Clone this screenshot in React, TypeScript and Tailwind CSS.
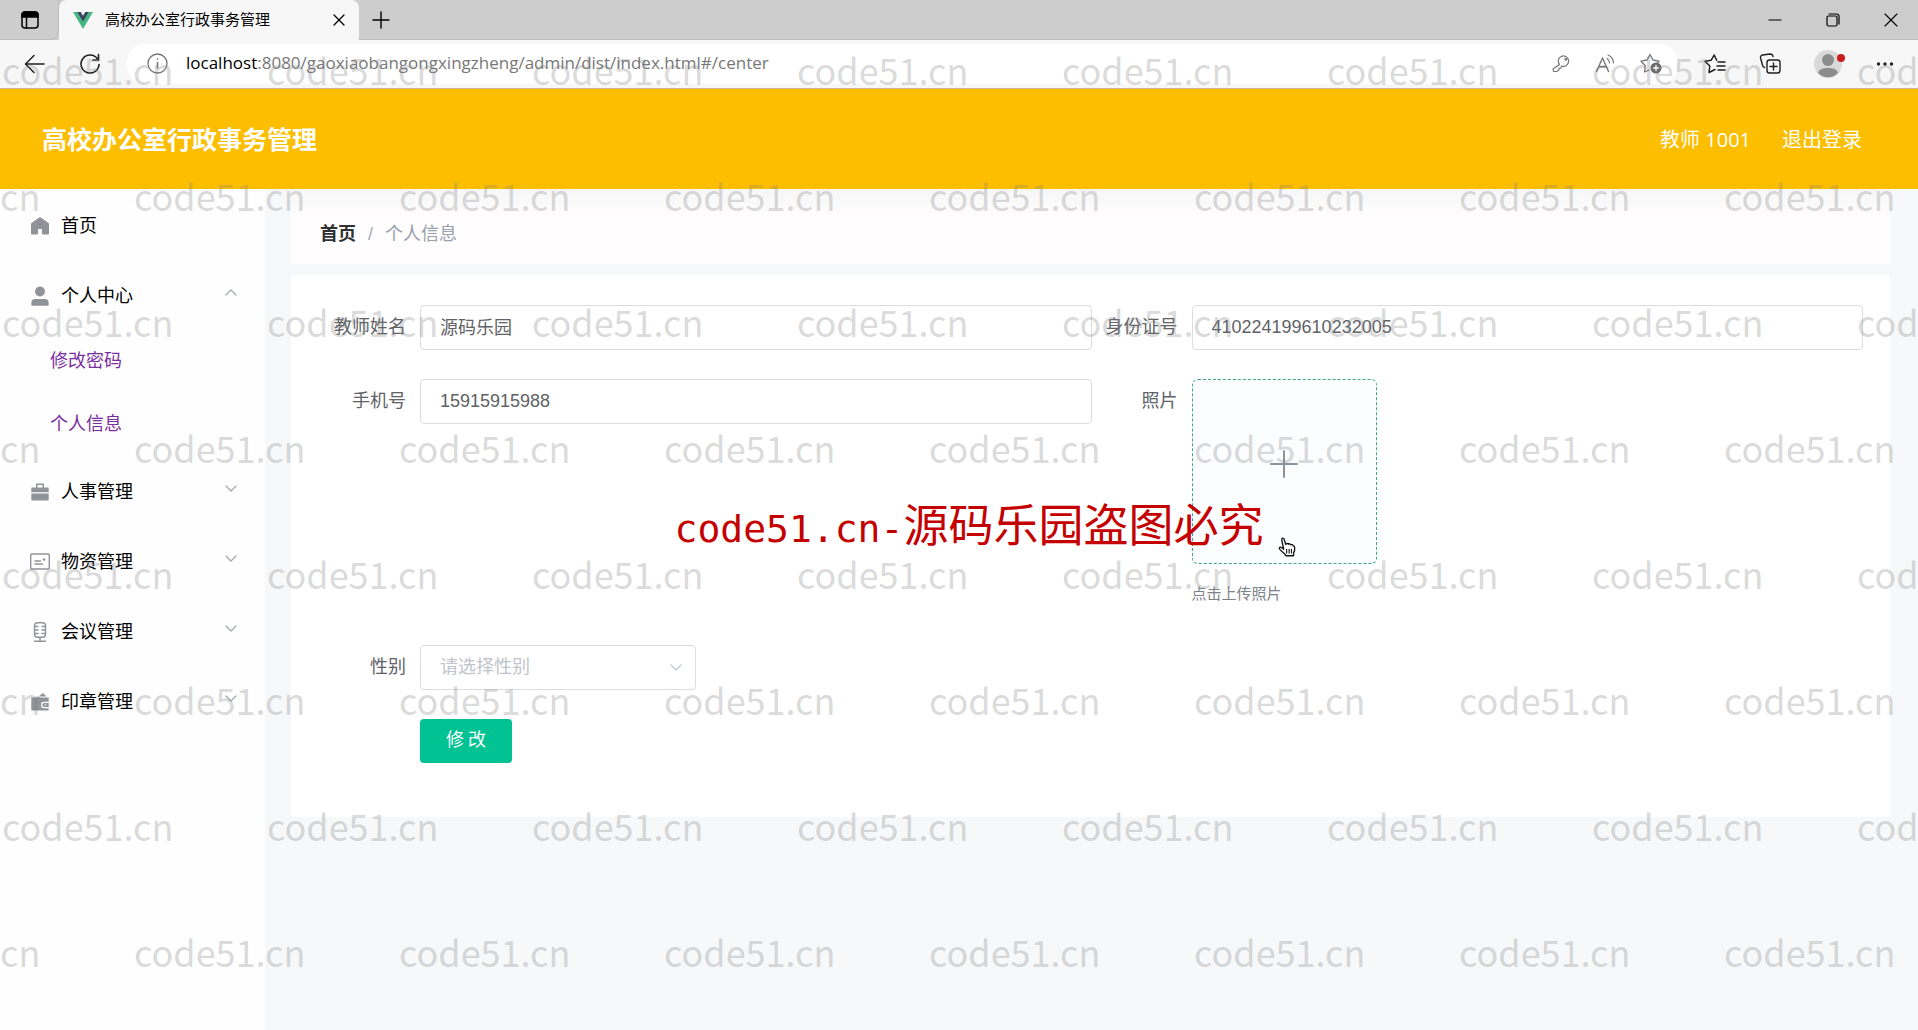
import type { ReactNode } from "react";

const stroke = {
  fill: "none",
  stroke: "currentColor",
  strokeLinecap: "round" as const,
  strokeLinejoin: "round" as const,
};

function BrowserTabs() {
  return (
    <div className="flex h-10 items-stretch bg-[#cdcdcd] text-black">
      <div className="flex w-[59px] items-center rounded-br-lg border-r border-b border-[#bdbdbd] pl-[21px]">
        <button type="button" aria-label="标签页操作">
          <svg width="18" height="18" viewBox="0 0 18 18" {...stroke} strokeWidth="1.5">
            <rect x="1" y="1" width="16" height="16" rx="3" />
            <path d="M1 4a3 3 0 0 1 3-3h10a3 3 0 0 1 3 3v2H1z" fill="currentColor" />
            <path d="M5.500 6v11" />
          </svg>
        </button>
      </div>
      <div className="flex w-[300px] items-center rounded-t-lg bg-[#f7f7f7] pr-2.5 pl-[14px]">
        <svg width="20" height="17" viewBox="0 0 20 17">
          <path d="M0 0h4l6 10L16 0h4L10 17z" fill="#42b883" />
          <path d="M4 0h3.800L10 3.800 12.200 0H16l-6 10z" fill="#35495e" />
        </svg>
        <span className="ml-3 flex-1 text-[15px]">高校办公室行政事务管理</span>
        <button type="button" aria-label="关闭标签页" className="p-1">
          <svg width="12" height="12" viewBox="0 0 12 12" {...stroke} strokeWidth="1.3">
            <path d="M1 1l10 10M11 1L1 11" />
          </svg>
        </button>
      </div>
      <div className="flex flex-1 items-center border-b border-[#bdbdbd] pl-[13px]">
        <button type="button" aria-label="新建标签页">
          <svg width="18" height="18" viewBox="0 0 18 18" {...stroke} strokeWidth="1.4">
            <path d="M9 1v16M1 9h16" />
          </svg>
        </button>
        <div className="ml-auto flex items-center gap-11 pr-5">
          <button type="button" aria-label="最小化">
            <svg width="14" height="14" viewBox="0 0 14 14" {...stroke} strokeWidth="1.2">
              <path d="M1 7h12" />
            </svg>
          </button>
          <button type="button" aria-label="还原">
            <svg width="14" height="14" viewBox="0 0 14 14" {...stroke} strokeWidth="1.2">
              <rect x="1" y="3" width="10" height="10" rx="1.500" />
              <path d="M3 1h7.500A2.500 2.500 0 0 1 13 3.500V11" />
            </svg>
          </button>
          <button type="button" aria-label="关闭">
            <svg width="14" height="14" viewBox="0 0 14 14" {...stroke} strokeWidth="1.1">
              <path d="M1 1l12 12M13 1L1 13" />
            </svg>
          </button>
        </div>
      </div>
    </div>
  );
}

function AddressBar() {
  return (
    <div className="flex h-[49px] items-center border-b border-[#c9b98c] bg-[#f7f7f7] pb-px text-[#1f1f1f]">
      <div className="flex w-[127px] items-center gap-[34px] pl-6">
        <button type="button" aria-label="后退">
          <svg width="21" height="20" viewBox="0 0 21 20" {...stroke} strokeWidth="1.5">
            <path d="M20 10H2M10 1.500L1.500 10l8.500 8.500" />
          </svg>
        </button>
        <button type="button" aria-label="刷新">
          <svg width="22" height="22" viewBox="0 0 22 22" {...stroke} strokeWidth="1.600">
            <path d="M20 11.500A9 9 0 1 1 18.500 6" />
            <path d="M19.500 1.500V7H14" />
          </svg>
        </button>
      </div>
      <div className="flex h-10 flex-1 items-center rounded-[18px] bg-white pr-4 pl-5 text-[#777]">
        <svg width="21" height="21" viewBox="0 0 21 21" {...stroke} strokeWidth="1.300">
          <circle cx="10.500" cy="10.500" r="9.500" />
          <path d="M10.500 9.500v5.500M10.500 6v.300" strokeWidth="1.600" />
        </svg>
        <p className="ml-[18px] flex-1 font-['Open_Sans',sans-serif] text-[17px]">
          <span className="text-black">localhost</span>:8080/gaoxiaobangongxingzheng/admin/dist/index.html#/center
        </p>
        <div className="flex items-center gap-6">
          <button type="button" aria-label="密码">
            <svg width="19" height="19" viewBox="0 0 19 19" {...stroke} strokeWidth="1.200">
              <path d="M7.500 10.500A5.200 5.200 0 1 1 11 12.300L9.500 12l-.500 2-2 .300-.300 2-2.200 1.200H1.500L1 15z" />
              <circle cx="13.800" cy="5.200" r=".9" />
            </svg>
          </button>
          <button type="button" aria-label="大声朗读">
            <svg width="21" height="19" viewBox="0 0 21 19" {...stroke} strokeWidth="1.400">
              <path d="M1.500 17.500L7.500 4l6 13.500M3.700 12.700h7.600" />
              <path d="M12 4.500a5.500 5.500 0 0 1 2.500 4.500M13 1a9 9 0 0 1 5.500 8" strokeWidth="1.200" />
            </svg>
          </button>
          <button type="button" aria-label="添加到收藏夹">
            <svg width="22" height="21" viewBox="0 0 22 21" {...stroke} strokeWidth="1.300">
              <path d="M9 17l-4.500 2 .800-6.200L1 8.200l6-1.200L10 1.500 13 7l6 1.200-1.800 2" />
              <circle cx="16" cy="15" r="5.500" fill="#6b6b6b" stroke="none" />
              <path d="M16 12.500v5M13.500 15h5" stroke="#fff" />
            </svg>
          </button>
        </div>
      </div>
      <div className="flex w-60 items-center pr-6 pl-[26px]">
        <button type="button" aria-label="收藏夹">
          <svg width="22" height="20" viewBox="0 0 22 20" {...stroke} strokeWidth="1.500">
            <path d="M11 15.500l-6 3 .800-6.500L1 7.200l6.200-1L10.200 1l2.500 5.200" />
            <path d="M14 8h7M13 12h8M14 16h7" />
          </svg>
        </button>
        <button type="button" aria-label="集锦" className="ml-[33px]">
          <svg width="22" height="21" viewBox="0 0 22 21" {...stroke} strokeWidth="1.400">
            <rect x="8" y="7" width="13" height="13" rx="2.500" />
            <path d="M14.500 10v7M11 13.500h7" />
            <path d="M5.500 14.500A3 3 0 0 1 3.500 12L1.500 5a2.500 2.500 0 0 1 2-3L11 1a3 3 0 0 1 3 2.500" />
          </svg>
        </button>
        <button type="button" aria-label="个人资料" className="ml-[33px]">
          <svg width="32" height="28" viewBox="0 0 32 28">
            <circle cx="14" cy="14" r="14" fill="#d9d9d9" />
            <circle cx="14" cy="10" r="6" fill="#8c8c8c" />
            <path d="M4 23c1-4 5-5 10-5s9 1 10 5a14 14 0 0 1-20 0z" fill="#8c8c8c" />
            <circle cx="27" cy="8" r="4" fill="#c81e1e" />
          </svg>
        </button>
        <button type="button" aria-label="更多" className="ml-auto">
          <svg width="18" height="4" viewBox="0 0 18 4" fill="#222">
            <circle cx="2.500" cy="2" r="1.700" />
            <circle cx="9" cy="2" r="1.700" />
            <circle cx="15.500" cy="2" r="1.700" />
          </svg>
        </button>
      </div>
    </div>
  );
}

const icons: Record<string, ReactNode> = {
  home: <path d="M10 1.500l8.500 6V18h-6v-5.500h-5V18h-6V7.500z" fill="currentColor" stroke="currentColor" strokeWidth="1" strokeLinejoin="round" />,
  user: (
    <g fill="currentColor">
      <circle cx="10" cy="5.500" r="5" />
      <path d="M1.300 19v-2a4 4 0 0 1 4-4h9.400a4 4 0 0 1 4 4v2a.700.700 0 0 1-.700.700H2a.700.700 0 0 1-.700-.700z" />
    </g>
  ),
  briefcase: (
    <g fill="currentColor">
      <path d="M1.300 11.500h17.400v6.300a.700.700 0 0 1-.700.700H2a.700.700 0 0 1-.700-.700z" />
      <path d="M1.300 10.200V6.300c0-.400.300-.700.700-.700h4V1.500h8v4.100h4c.400 0 .700.300.700.700v3.900zM7.500 5.600h5V3h-5z" fillRule="evenodd" />
    </g>
  ),
  postcard: (
    <g {...stroke} strokeWidth="1.400">
      <rect x="0.700" y="2" width="18.600" height="15" rx="1" />
      <path d="M5 9h5.500M5 12h7.500" />
      <circle cx="14" cy="7.500" r="1.300" fill="currentColor" stroke="none" />
    </g>
  ),
  mic: (
    <g {...stroke} strokeWidth="1.400">
      <rect x="4.500" y="0.700" width="11" height="14.500" rx="3" />
      <path d="M5 4.500h3M5 8h3M5 11.500h3M15 4.500h-3M15 8h-3M15 11.500h-3M10 15.500v3.500M4.500 19.300h11" />
    </g>
  ),
  wallet: (
    <g fill="currentColor">
      <path d="M1.300 5.500h4.200l2-1 2.300 1h8.900v4.200h-4.500a3.300 3.300 0 0 0 0 6.600h4.500v1.400a.700.700 0 0 1-.700.700H2a.700.700 0 0 1-.700-.700z" />
      <path d="M8.500 4.500L13 1l3.500 3.500z" />
      <path d="M14.200 11h4.500v4h-4.500a2 2 0 0 1 0-4zm.300 1.400v1.200h1.800v-1.200z" fillRule="evenodd" />
    </g>
  ),
};

function Chevron({ up = false }: { up?: boolean }) {
  return (
    <svg width="12" height="7" viewBox="0 0 12 7" {...stroke} strokeWidth="1.200" className={up ? "rotate-180" : ""}>
      <path d="M1 1l5 5 5-5" />
    </svg>
  );
}

function MenuItem({ icon, label, open }: { icon: string; label: string; open?: boolean }) {
  return (
    <button type="button" className="flex h-[70px] w-full items-center pr-7 pl-[30px] text-left text-black">
      <svg width="20" height="20" viewBox="0 0 20 20" className="text-[#909399]">
        {icons[icon]}
      </svg>
      <span className="ml-[11px] flex-1">{label}</span>
      {open !== undefined && (
        <span className="pb-2 text-[#a3a6ad]">
          <Chevron up={open} />
        </span>
      )}
    </button>
  );
}

function Sidebar() {
  return (
    <nav className="w-[265px] shrink-0 bg-[#fefefe] pt-0.5">
      <MenuItem icon="home" label="首页" />
      <MenuItem icon="user" label="个人中心" open />
      <a href="#/updatePassword" className="flex h-[63px] items-center pb-1 pl-[50px] text-[#7a2fa0]">
        修改密码
      </a>
      <a href="#/center" className="flex h-[63px] items-center pb-1 pl-[50px] text-[#7a2fa0]">
        个人信息
      </a>
      <MenuItem icon="briefcase" label="人事管理" open={false} />
      <MenuItem icon="postcard" label="物资管理" open={false} />
      <MenuItem icon="mic" label="会议管理" open={false} />
      <MenuItem icon="wallet" label="印章管理" open={false} />
    </nav>
  );
}

function Field({ id, label, children }: { id: string; label: string; children: ReactNode }) {
  return (
    <div className="flex items-start">
      <label htmlFor={id} className="w-[100px] shrink-0 pr-[14px] text-right leading-[45px]">
        {label}
      </label>
      {children}
    </div>
  );
}

const inputClass =
  "h-[45px] w-full min-w-0 flex-1 rounded-sm border border-[#dcdcdc] bg-white px-[19px] text-[#606266] outline-none";

function HandCursor() {
  return (
    <svg
      width="18"
      height="20"
      viewBox="0 0 16 18"
      className="absolute top-[157px] left-[85px]"
      stroke="#111"
      strokeWidth="1.200"
      strokeLinejoin="round"
      strokeLinecap="round"
      fill="#fff"
    >
      <path d="M5 11L3.300 2.700C2.900.900 4.900.300 5.400 2l1.500 4.700c.400-1.200 1.900-1.100 2.300-.200.600-.700 1.900-.400 2.200.500.900-.500 2 0 2.200 1 .500 0 1.200.300 1.300 1.200.200 1.900 0 3.700-1 5.300v2.400H7c-.900-2.200-3.300-3.400-5.400-5.800-.900-1.100-.400-2.200.700-2 1 .200 1.700 1 2.700 1.900z" />
      <path d="M7.700 11v3.500M9.900 11v3.500M12 11v3.500" fill="none" strokeWidth="1" />
    </svg>
  );
}

function ProfileForm() {
  return (
    <form className="rounded-sm bg-white pt-[30px] pr-[27px] pb-[54px] pl-[29px] text-[#606266]">
      <div className="grid grid-cols-2 gap-y-[29px]">
        <Field id="name" label="教师姓名">
          <input id="name" defaultValue="源码乐园" className={`${inputClass} pb-1`} />
        </Field>
        <Field id="idcard" label="身份证号">
          <input id="idcard" defaultValue="410224199610232005" className={inputClass} />
        </Field>
        <Field id="phone" label="手机号">
          <input id="phone" defaultValue="15915915988" className={inputClass} />
        </Field>
        <Field id="photo" label="照片">
          <div className="pb-[15px]">
            <button
              id="photo"
              type="button"
              aria-label="上传照片"
              className="relative flex h-[185px] w-[185px] items-center justify-center rounded-md border border-dashed border-[#3aa58c] bg-[#fbfdff] pb-4 text-[#8c939d]"
            >
              <svg width="28" height="28" viewBox="0 0 28 28" {...stroke} strokeWidth="2">
                <path d="M14 1v26M1 14h26" />
              </svg>
              <HandCursor />
            </button>
            <p className="mt-[22px] h-[15px] overflow-hidden text-[15px] leading-4 text-[#7d8288]">点击上传照片</p>
          </div>
        </Field>
        <Field id="gender" label="性别">
          <div className="relative w-[276px]">
            <select
              id="gender"
              defaultValue=""
              className="h-[45px] w-full appearance-none rounded-sm border border-[#dcdcdc] bg-white px-[19px] pb-0.5 text-[#c0c4cc] outline-none"
            >
              <option value="">请选择性别</option>
              <option value="男">男</option>
              <option value="女">女</option>
            </select>
            <span className="pointer-events-none absolute inset-y-0 right-[14px] flex items-center text-[#c0c4cc]">
              <Chevron />
            </span>
          </div>
        </Field>
      </div>
      <button type="submit" className="mt-[29px] ml-[100px] flex h-11 w-[92px] items-center justify-center gap-1 rounded bg-[#00c292] pb-0.5 text-white">
        <span>修</span>
        <span>改</span>
      </button>
    </form>
  );
}

function Watermark() {
  return (
    <div aria-hidden="true" className="pointer-events-none absolute inset-0 overflow-hidden pt-[15px] font-['Noto_Sans_CJK_SC',sans-serif] text-4xl text-[#808080]/30">
      {Array.from({ length: 8 }, (_, row) => (
        <div key={row} className={row % 2 ? "-ml-[133px] flex h-[126px]" : "flex h-[126px]"}>
          {Array.from({ length: 8 }, (_, col) => (
            <span key={col} className="w-[265px] shrink-0 pt-9 pl-0.5 leading-9">
              code51.cn
            </span>
          ))}
        </div>
      ))}
      <p className="absolute inset-x-0 top-[493px] flex items-baseline justify-center pl-5 text-[45px] leading-[60px] text-[#c40000]">
        <span className="font-['DejaVu_Sans_Mono',monospace] text-[38px]">code51.cn-</span>
        <span>源码乐园盗图必究</span>
      </p>
    </div>
  );
}

export default function App() {
  return (
    <div className="relative flex min-h-screen flex-col overflow-hidden bg-[#f6f8fa] font-['Liberation_Sans','Noto_Sans_CJK_SC',sans-serif] text-lg">
      <BrowserTabs />
      <AddressBar />
      <header className="flex h-[100px] items-center justify-between bg-[#fdbe00] pt-0.5 pr-14 pl-[42px] text-white">
        <h1 className="text-[25px] font-bold">高校办公室行政事务管理</h1>
        <div className="flex gap-[31px] font-['Open_Sans','Noto_Sans_CJK_SC',sans-serif] text-xl">
          <span>教师 1001</span>
          <button type="button">退出登录</button>
        </div>
      </header>
      <div className="flex flex-1">
        <Sidebar />
        <main className="min-w-0 flex-1 pr-7 pl-[26px]">
          <div className="mb-[11px] flex h-[75px] items-center gap-3 bg-gradient-to-b from-[#f7f7f7] to-[#fffdfd] to-40% pt-[15px] pl-[29px]">
            <a href="#/" className="font-bold text-[#303133]">
              首页
            </a>
            <span className="text-[#a8abb2]">/</span>
            <span className="text-[#97a0ad]">个人信息</span>
          </div>
          <ProfileForm />
        </main>
      </div>
      <Watermark />
    </div>
  );
}
